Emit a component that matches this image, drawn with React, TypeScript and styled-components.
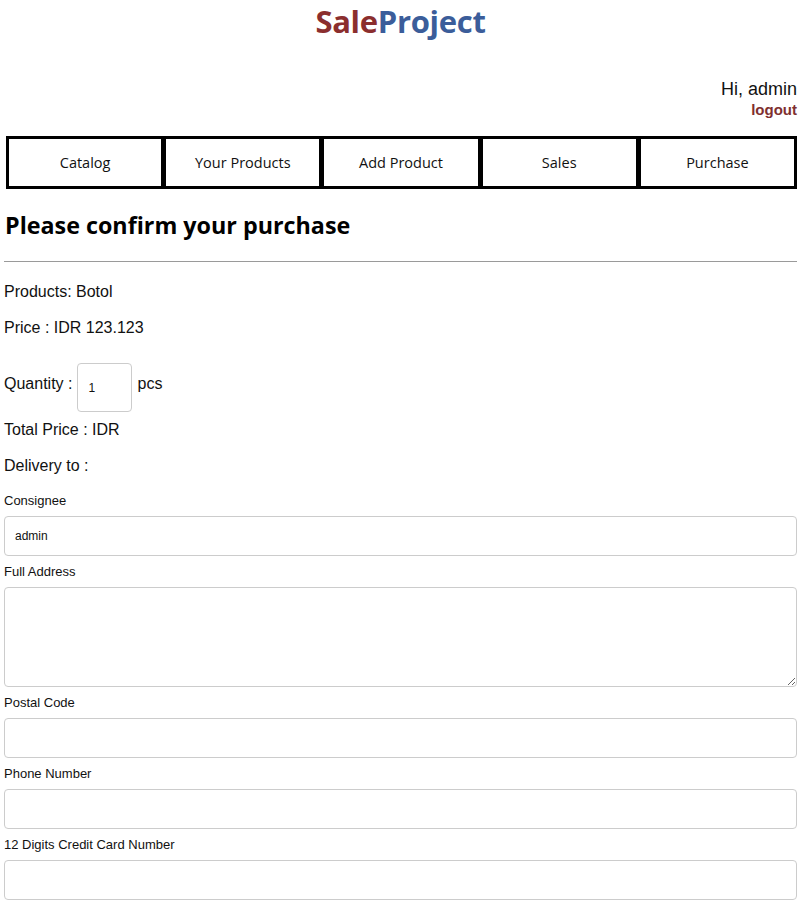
import React from "react";
import styled, { createGlobalStyle } from "styled-components";

const Global = createGlobalStyle`
  html, body { margin: 0; padding: 0; background: #fff; }
  body { font-family: "Liberation Sans", Arial, sans-serif; color: #111; }
  * { box-sizing: border-box; }
`;

const Page = styled.div`
  width: 811px;
  padding: 0 14px 0 4px;
`;

const Brand = styled.h1`
  margin: 0;
  height: 42px;
  line-height: 42px;
  text-align: center;
  font-family: "Open Sans", "Noto Sans", sans-serif;
  font-weight: 700;
  font-size: 31px;
  letter-spacing: -0.3px;
`;

const BrandPart = styled.span<{ $tone: "red" | "blue" }>`
  color: ${(p) => (p.$tone === "red" ? "#8b2e2e" : "#3b5d9a")};
`;

const UserBox = styled.div`
  margin-top: 37px;
  text-align: right;
`;

const Greeting = styled.div`
  font-size: 18px;
  line-height: 20px;
  color: #111;
`;

const Logout = styled.a`
  display: block;
  font-size: 15px;
  line-height: 22px;
  font-weight: 700;
  color: #7f2f2f;
  text-decoration: none;
`;

const Nav = styled.nav`
  margin: 15px 0 0 2px;
  display: grid;
  grid-template-columns: repeat(5, 1fr);
`;

const NavItem = styled.a`
  display: flex;
  align-items: center;
  justify-content: center;
  height: 53px;
  border: 3px solid #000;
  margin-left: -1px;
  font-family: "Open Sans", "Noto Sans", sans-serif;
  font-size: 14.5px;
  color: #111;
  text-decoration: none;
  &:first-child { margin-left: 0; }
`;

const Heading = styled.h2`
  margin: 21px 0 0 1px;
  font-family: "Open Sans", "Noto Sans", sans-serif;
  font-weight: 700;
  font-size: 23.3px;
  line-height: 30px;
  color: #000;
`;

const Rule = styled.hr`
  margin: 21px 0 0 0;
  border: 0;
  border-top: 1px solid #9a9a9a;
  height: 0;
`;

const Line = styled.p<{ $gap: number }>`
  margin: ${(p) => p.$gap}px 0 0 0;
  font-size: 16px;
  line-height: 20px;
`;

const QtyRow = styled.div`
  margin-top: 25px;
  display: flex;
  align-items: center;
  gap: 5px;
  font-size: 16px;
`;

const QtyText = styled.span`
  line-height: 20px;
  margin-bottom: 7px;
`;

const QtyInput = styled.input`
  width: 55px;
  height: 49px;
  border: 1px solid #ccc;
  border-radius: 4px;
  padding: 0 10px;
  font-family: "Liberation Sans", Arial, sans-serif;
  font-size: 12px;
  color: #111;
  outline: none;
`;

const FieldLabel = styled.label<{ $gap: number }>`
  display: block;
  margin: ${(p) => p.$gap}px 0 7px 0;
  font-size: 13px;
  line-height: 16px;
  color: #111;
`;

const TextInput = styled.input`
  display: block;
  width: 100%;
  height: 40px;
  border: 1px solid #ccc;
  border-radius: 4px;
  padding: 0 10px;
  font-family: "Liberation Sans", Arial, sans-serif;
  font-size: 12px;
  color: #111;
  outline: none;
`;

const TextArea = styled.textarea`
  display: block;
  width: 100%;
  height: 100px;
  border: 1px solid #ccc;
  border-radius: 4px;
  padding: 6px 10px;
  font-family: "Liberation Sans", Arial, sans-serif;
  font-size: 12px;
  outline: none;
  resize: both;
`;

const navItems = ["Catalog", "Your Products", "Add Product", "Sales", "Purchase"];

export default function App() {
  return (
    <>
      <Global />
      <Page>
        <Brand>
          <BrandPart $tone="red">Sale</BrandPart>
          <BrandPart $tone="blue">Project</BrandPart>
        </Brand>
        <UserBox>
          <Greeting>Hi, admin</Greeting>
          <Logout href="#">logout</Logout>
        </UserBox>
        <Nav>
          {navItems.map((n) => (
            <NavItem key={n} href="#">
              {n}
            </NavItem>
          ))}
        </Nav>
        <Heading>Please confirm your purchase</Heading>
        <Rule />
        <Line $gap={20}>Products: Botol</Line>
        <Line $gap={16}>Price : IDR 123.123</Line>
        <QtyRow>
          <QtyText>Quantity :</QtyText>
          <QtyInput defaultValue="1" />
          <QtyText>pcs</QtyText>
        </QtyRow>
        <Line $gap={8}>Total Price : IDR</Line>
        <Line $gap={16}>Delivery to :</Line>
        <FieldLabel $gap={17}>Consignee</FieldLabel>
        <TextInput defaultValue="admin" />
        <FieldLabel $gap={8}>Full Address</FieldLabel>
        <TextArea />
        <FieldLabel $gap={8}>Postal Code</FieldLabel>
        <TextInput />
        <FieldLabel $gap={8}>Phone Number</FieldLabel>
        <TextInput />
        <FieldLabel $gap={8}>12 Digits Credit Card Number</FieldLabel>
        <TextInput />
      </Page>
    </>
  );
}
